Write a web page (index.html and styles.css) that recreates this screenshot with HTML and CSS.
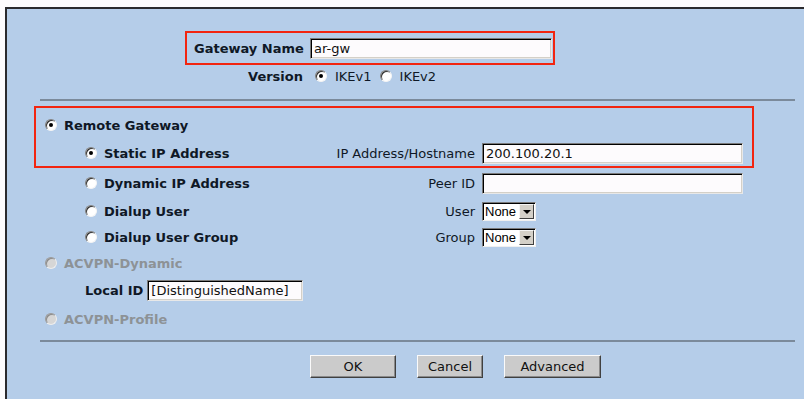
FILE: index.html
```html
<!DOCTYPE html>
<html lang="en">

<head>
    <meta charset="UTF-8">
    <meta name="viewport" content="width=device-width, initial-scale=1.0">
    <title>Gateway</title>
    <link rel="stylesheet" href="styles.css">
</head>

<body>
    <div class="frame">
        <div class="name-box">
            <div class="head-label">Gateway Name</div>
            <div class="textbox name-input">ar-gw</div>
        </div>
        <div class="version-row">
            <div class="head-label">Version</div>
            <span class="radio checked"></span>
            <span class="ver-text">IKEv1</span>
            <span class="radio"></span>
            <span class="ver-text">IKEv2</span>
        </div>

        <div class="divider"></div>

        <div class="remote-box">
            <div class="row row-top">
                <div class="opt lvl1"><span class="radio checked"></span><b>Remote Gateway</b></div>
            </div>
            <div class="row row-static">
                <div class="opt lvl2"><span class="radio checked"></span><b>Static IP Address</b></div>
                <div class="lbl">IP Address/Hostname</div>
                <div class="textbox wide">200.100.20.1</div>
            </div>
        </div>
        <div class="rows">
            <div class="row row-dyn">
                <div class="opt lvl2"><span class="radio"></span><b>Dynamic IP Address</b></div>
                <div class="lbl">Peer ID</div>
                <div class="textbox wide"></div>
            </div>
            <div class="row">
                <div class="opt lvl2"><span class="radio"></span><b>Dialup User</b></div>
                <div class="lbl">User</div>
                <div class="dropdown"><span class="dd-value">None</span><span class="dd-btn"></span></div>
            </div>
            <div class="row">
                <div class="opt lvl2"><span class="radio"></span><b>Dialup User Group</b></div>
                <div class="lbl">Group</div>
                <div class="dropdown"><span class="dd-value">None</span><span class="dd-btn"></span></div>
            </div>
            <div class="row">
                <div class="opt lvl1 disabled"><span class="radio"></span><b>ACVPN-Dynamic</b></div>
            </div>
            <div class="row row-local">
                <div class="local-id"><b>Local ID</b><div class="textbox local-input">[DistinguishedName]</div></div>
            </div>
            <div class="row row-profile">
                <div class="opt lvl1 disabled"><span class="radio"></span><b>ACVPN-Profile</b></div>
            </div>
        </div>

        <div class="divider bottom"></div>

        <div class="buttons">
            <button class="btn btn-ok">OK</button>
            <button class="btn btn-cancel">Cancel</button>
            <button class="btn btn-adv">Advanced</button>
        </div>
    </div>
</body>

</html>
```

FILE: styles.css
```css
* {
    margin: 0;
    padding: 0;
    box-sizing: border-box;
}

html,
body {
    overflow: hidden;
    height: 100%;
}

body {
    background: #fcfbfd;
    font-family: "DejaVu Sans", Verdana, sans-serif;
    font-size: 13px;
    color: #0f1826;
}

.frame {
    margin: 7px 0 0 5px;
    width: 830px;
    height: 392px;
    overflow: hidden;
    background: #b5cde9;
    border-top: 2px solid #2a2a2e;
    border-left: 2px solid #2a2a2e;
    padding-top: 22px;
}

/* 顶部网关名称 */
.name-box {
    display: flex;
    align-items: center;
    margin-left: 178px;
    width: 370px;
    height: 34px;
    border: 2px solid #f22510;
    padding-left: 7px;
}

.head-label {
    width: 109px;
    text-align: right;
    font-weight: bold;
    margin-right: 7px;
    white-space: nowrap;
}

.textbox {
    height: 21px;
    background: #fdfbfd;
    border: 1px solid;
    border-color: #7a7a7a #e8e8e8 #e8e8e8 #7a7a7a;
    box-shadow: inset 1px 1px #000, inset -1px -1px #d4d0c8;
    font-size: 13px;
    line-height: 19px;
    padding-left: 3px;
    color: #111;
    white-space: nowrap;
}

.name-input {
    width: 242px;
}

.version-row {
    display: flex;
    align-items: center;
    height: 22px;
    margin-left: 187px;
}

.version-row .radio {
    margin-left: 5px;
}

.ver-text {
    margin-left: 8px;
    margin-right: 3px;
}

/* 单选按钮 */
.radio {
    display: inline-block;
    position: relative;
    width: 12px;
    height: 12px;
    flex-shrink: 0;
    border-radius: 50%;
    background: #fff;
    border: 1px solid;
    border-color: #808080 #f4f4f4 #f4f4f4 #808080;
    box-shadow: inset 1px 1px #303030;
}

.radio.checked::after {
    content: "";
    position: absolute;
    left: 3px;
    top: 3px;
    width: 4px;
    height: 4px;
    border-radius: 50%;
    background: #000;
}

.divider {
    margin: 12px 0 0 33px;
    width: 755px;
    height: 2px;
    background: #7b8a9b;
}

.remote-box {
    margin: 5px 0 0 27px;
    width: 720px;
    height: 62px;
    border: 2px solid #f22510;
    padding-top: 2px;
}

.rows {
    margin-left: 29px;
}

.row {
    display: flex;
    align-items: center;
    height: 26px;
}

.row-top {
    height: 30px;
}

.row-dyn,
.row-profile {
    height: 30px;
}

.row-local {
    height: 28px;
}

.opt {
    display: flex;
    align-items: center;
    width: 260px;
    white-space: nowrap;
}

.opt b {
    margin-left: 7px;
}

.lvl1 {
    padding-left: 9px;
}

.lvl2 {
    padding-left: 49px;
}

.opt.disabled {
    color: #8d9296;
}

.opt.disabled .radio {
    background: #d6d6d6;
    border-color: #9a9a9a #eeeeee #eeeeee #9a9a9a;
    box-shadow: inset 1px 1px #8a8a8a;
}

.lbl {
    width: 179px;
    text-align: right;
    margin-right: 7px;
    white-space: nowrap;
}

.wide {
    width: 261px;
}

.local-id {
    display: flex;
    align-items: center;
    padding-left: 49px;
}

.local-input {
    width: 156px;
    margin-left: 4px;
}

/* 下拉框 */
.dropdown {
    display: flex;
    width: 54px;
    height: 19px;
    background: #fff;
    border: 1px solid;
    border-color: #7a7a7a #f0f0f0 #f0f0f0 #7a7a7a;
    box-shadow: inset 1px 1px #000;
    padding: 1px 1px 1px 2px;
    font-family: "Liberation Sans", Arial, sans-serif;
    font-size: 13px;
}

.dd-value {
    flex: 1;
    line-height: 15px;
    color: #000;
}

.dd-btn {
    position: relative;
    width: 15px;
    height: 15px;
    background: #d4d0c8;
    border: 1px solid;
    border-color: #f4f4f4 #404040 #404040 #f4f4f4;
}

.dd-btn::after {
    content: "";
    position: absolute;
    left: 3px;
    top: 5px;
    border-left: 4px solid transparent;
    border-right: 4px solid transparent;
    border-top: 4px solid #000;
}

.divider.bottom {
    margin-top: 6px;
}

.buttons {
    display: flex;
    gap: 21px;
    margin: 13px 0 0 303px;
}

.btn {
    height: 23px;
    background: #cbcbcb;
    font-family: "DejaVu Sans", Verdana, sans-serif;
    font-size: 13px;
    color: #111;
    border: 1px solid;
    border-color: #fafafa #404040 #404040 #fafafa;
    box-shadow: inset -1px -1px #8a8a8a;
}

.btn-ok {
    width: 86px;
}

.btn-cancel {
    width: 66px;
}

.btn-adv {
    width: 97px;
}
```
